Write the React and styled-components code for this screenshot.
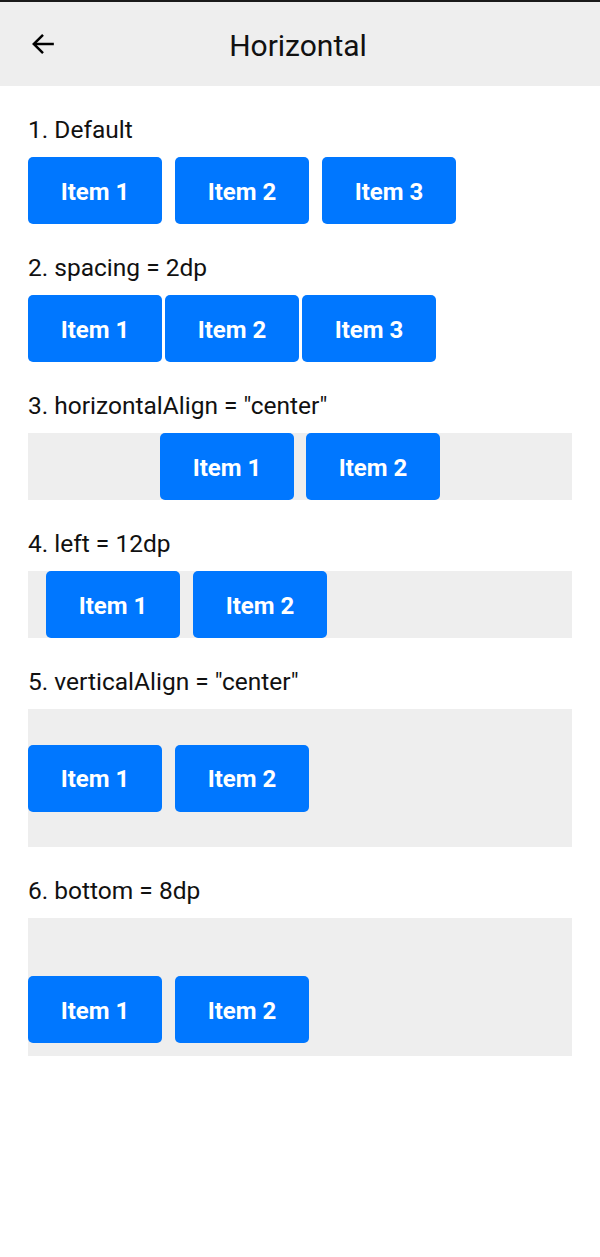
import React from 'react';
import styled, { createGlobalStyle } from 'styled-components';

const GlobalStyle = createGlobalStyle`
	html, body {
		margin: 0;
		padding: 0;
		background: #ffffff;
		font-family: Roboto, "Liberation Sans", sans-serif;
	}
`;

const sections = [
	{ title: '1. Default', items: 3, gap: 13 },
	{ title: '2. spacing = 2dp', items: 3, gap: 3 },
	{ title: '3. horizontalAlign = "center"', items: 2, gap: 12, boxed: true, justify: 'center' },
	{ title: '4. left = 12dp', items: 2, gap: 13, boxed: true, padLeft: 18 },
	{ title: '5. verticalAlign = "center"', items: 2, gap: 13, boxed: true, tall: true, align: 'center' },
	{ title: '6. bottom = 8dp', items: 2, gap: 13, boxed: true, tall: true, align: 'flex-end', padBottom: 13 },
];

const BackArrow = () => (
	<svg width="26" height="26" viewBox="0 0 24 24" fill="none" stroke="#000" strokeWidth="2.3">
		<path d="M22 12H3.5" />
		<path d="M12 3.5L3.5 12L12 20.5" />
	</svg>
);

const App = () => {
	return (
		<>
			<GlobalStyle />
			<Page>
				<StatusLine />
				<Header>
					<BackButton>
						<BackArrow />
					</BackButton>
					<Title>Horizontal</Title>
				</Header>
				<Content>
					{sections.map((s) => (
						<Section key={s.title}>
							<Label>{s.title}</Label>
							<Row
								$gap={s.gap}
								$boxed={s.boxed}
								$tall={s.tall}
								$justify={s.justify}
								$align={s.align}
								$padLeft={s.padLeft}
								$padBottom={s.padBottom}
							>
								{Array.from({ length: s.items }).map((_, i) => (
									<Item key={i}>Item {i + 1}</Item>
								))}
							</Row>
						</Section>
					))}
				</Content>
			</Page>
		</>
	);
};

export default App;

const Page = styled.div`
	width: 600px;
	min-height: 1257px;
	background: #ffffff;
`;
const StatusLine = styled.div`
	height: 2px;
	background: #1a1a1a;
`;
const Header = styled.header`
	height: 84px;
	background: #eeeeee;
	display: flex;
	align-items: center;
	justify-content: center;
	position: relative;
`;
const BackButton = styled.div`
	position: absolute;
	left: 30px;
	top: 29px;
	width: 26px;
	height: 26px;
	display: flex;
`;
const Title = styled.h1`
	margin: 0;
	font-size: 30px;
	font-weight: 400;
	color: #111111;
	transform: translate(-2px, 1px);
`;
const Content = styled.main`
	padding: 0 28px;
`;
const Section = styled.section`
	padding-top: 30px;
`;
const Label = styled.div`
	height: 28px;
	line-height: 28px;
	font-size: 24.5px;
	color: #111111;
	margin-bottom: 13px;
`;
const Row = styled.div`
	display: flex;
	gap: ${(p) => p.$gap}px;
	height: ${(p) => (p.$tall ? 138 : 67)}px;
	background: ${(p) => (p.$boxed ? '#eeeeee' : 'transparent')};
	justify-content: ${(p) => p.$justify || 'flex-start'};
	align-items: ${(p) => p.$align || 'flex-start'};
	padding-left: ${(p) => p.$padLeft || 0}px;
	padding-bottom: ${(p) => p.$padBottom || 0}px;
	box-sizing: border-box;
`;
const Item = styled.div`
	width: 134px;
	height: 67px;
	flex-shrink: 0;
	border-radius: 5px;
	background: #0077ff;
	color: #ffffff;
	font-size: 24px;
	font-weight: 700;
	display: flex;
	align-items: center;
	justify-content: center;
	padding-top: 2px;
	box-sizing: border-box;
`;
